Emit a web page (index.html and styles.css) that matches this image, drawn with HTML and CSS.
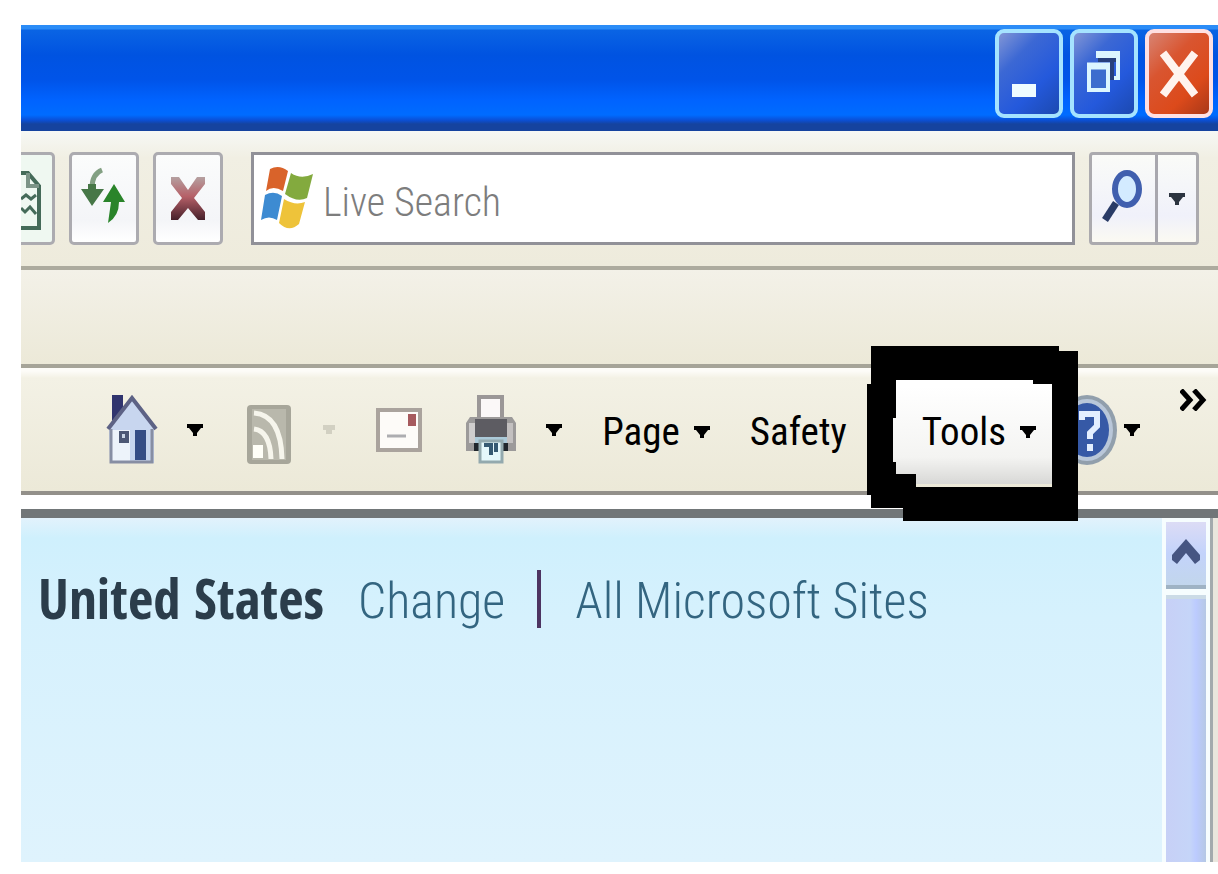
FILE: index.html
```html
<!DOCTYPE html>
<html lang="en">
<head>
    <meta charset="UTF-8">
    <meta name="viewport" content="width=device-width, initial-scale=1.0">
    <title>United States</title>
    <link rel="stylesheet" href="styles.css">
</head>
<body>

<div class="window">
    <div class="titlebar">
        <button class="win-btn" aria-label="Minimize">
            <svg width="64" height="82" viewBox="-2 0 64 82"><rect x="13" y="51" width="24" height="13" fill="#effcff"/></svg>
        </button>
        <button class="win-btn" aria-label="Restore">
            <svg width="64" height="82" viewBox="-2 -1 64 82">
                <path d="M22 19H44V44H37M22 22H44" fill="none" stroke="#dcf6ff" stroke-width="4"/>
                <path d="M24 26H42M38 28V46" fill="none" stroke="#27407c" stroke-width="4"/>
                <path d="M15 31H34V56H15Z" fill="#3c6dce" stroke="#dcf6ff" stroke-width="4"/>
                <path d="M13 32H36" stroke="#dcf6ff" stroke-width="7"/>
            </svg>
        </button>
        <button class="win-btn win-close" aria-label="Close">
            <svg width="64" height="82" viewBox="-2 0 64 82"><path d="M14 20L46 62M46 20L14 62" stroke="#fff3ee" stroke-width="8"/></svg>
        </button>
    </div>

    <div class="navbar">
        <button class="nav-btn nav-cut" aria-label="Compatibility View">
            <svg width="30" height="80" viewBox="0 0 30 80" fill="none" stroke="#456b59" stroke-width="4">
                <path d="M0 14H7L18 27V69H0"/>
                <path d="M7 14V27H18" stroke="#7c9487"/>
                <path d="M0 40L5 36L10 40L15 36M0 49L4 53L9 48L15 55" stroke-width="3"/>
            </svg>
        </button>
        <button class="nav-btn" aria-label="Refresh">
            <svg width="64" height="80" viewBox="0 0 64 80">
                <path d="M30 11Q20 15 20 29" fill="none" stroke="#83a083" stroke-width="5"/>
                <path d="M9 30H16V25H24V30H32L20 47Z" fill="#477747"/>
                <path d="M42 25L53 43H47Q47 57 36 64L39 43H31Z" fill="#2a842a"/>
            </svg>
        </button>
        <button class="nav-btn" aria-label="Stop">
            <svg width="64" height="80" viewBox="0 0 64 80">
                <defs>
                    <linearGradient id="stop" x1="0" y1="0" x2="0" y2="1">
                        <stop offset="0" stop-color="#b5a0a0"/>
                        <stop offset="0.45" stop-color="#b66068"/>
                        <stop offset="1" stop-color="#46202a"/>
                    </linearGradient>
                </defs>
                <path d="M15 18H23L32 31L41 18H49V25L38 39L49 53V61H42L32 49L22 61H15V53L26 39L15 25Z" fill="url(#stop)"/>
            </svg>
        </button>
        <label class="search">
            <svg width="54" height="66" viewBox="0 0 54 66">
                <path d="M9 3Q18 -2 27 5L22 25Q12 19 5 25Z" fill="#d9632a"/>
                <path d="M30 7Q40 14 52 8L46 32Q36 37 24 28Z" fill="#83aa3e"/>
                <path d="M4 29Q13 24 21 30L16 54Q8 49 0 54Z" fill="#3d8bd2"/>
                <path d="M23 33Q34 40 44 36L38 58Q28 67 18 57Z" fill="#eec33a"/>
            </svg>
            <input type="text" placeholder="Live Search" aria-label="Live Search">
        </label>
        <div class="search-go">
            <button class="go-btn" aria-label="Search">
                <svg width="62" height="80" viewBox="0 0 62 80" fill="none">
                    <path d="M24 44L13 61" stroke="#293b66" stroke-width="7"/>
                    <ellipse cx="35" cy="30" rx="12" ry="16" fill="#d3ebff" stroke="#405fae" stroke-width="6"/>
                </svg>
            </button>
            <button class="go-more" aria-label="Search Options">
                <svg class="arrow" width="18" height="12" viewBox="0 0 18 12"><path d="M1 0H17V4H15L11 9V12H7V9L3 4H1Z"/></svg>
            </button>
        </div>
    </div>

    <div class="tabbar"></div>

    <div class="commandbar">
        <button class="cmd" aria-label="Home">
            <svg width="52" height="70" viewBox="0 0 52 70">
                <path d="M6 0H17V14L6 26Z" fill="#30346e"/>
                <path d="M3 34L26 4L48 34V68H4Z" fill="#c8d6ef"/>
                <path d="M5 35H24V67H5Z" fill="#edf3fa"/>
                <path d="M2 34L26 3L50 34" fill="none" stroke="#5d6285" stroke-width="4"/>
                <path d="M5 34V67H46V34" fill="none" stroke="#878ea3" stroke-width="3"/>
                <rect x="13" y="36" width="10" height="12" fill="#4d5874"/>
                <rect x="29" y="35" width="11" height="30" fill="#354d86"/>
                <rect x="16" y="39" width="3" height="4" fill="#cbd6e4"/>
            </svg>
            <svg class="arrow" width="18" height="12" viewBox="0 0 18 12"><path d="M1 0H17V4H15L11 9V12H7V9L3 4H1Z"/></svg>
        </button>
        <button class="cmd" aria-label="Feeds">
            <svg width="52" height="70" viewBox="0 0 52 70">
                <rect x="4" y="10" width="44" height="59" rx="4" fill="#a7a69a"/>
                <rect x="9" y="14" width="34" height="51" fill="#b9b8ac"/>
                <g fill="none" stroke="#f6f5ec" stroke-width="5">
                    <path d="M11 18Q38 20 39 64"/>
                    <path d="M11 34Q27 36 28 64"/>
                </g>
                <rect x="10" y="50" width="10" height="13" fill="#fffff8"/>
            </svg>
            <svg class="arrow arrow-off" width="12" height="9" viewBox="0 0 12 9"><path d="M0 0H12V5H9V9H3V5H0Z"/></svg>
        </button>
        <button class="cmd" aria-label="Read Mail">
            <svg width="52" height="70" viewBox="0 0 52 70">
                <rect x="4" y="15" width="42" height="40" fill="#fdfbf8" stroke="#aaa39d" stroke-width="4"/>
                <rect x="34" y="19" width="8" height="12" fill="#a65a5e"/>
                <path d="M13 41H32" stroke="#adadb0" stroke-width="3"/>
            </svg>
        </button>
        <button class="cmd" aria-label="Print">
            <svg width="52" height="70" viewBox="0 0 52 70">
                <rect x="14" y="2" width="23" height="26" fill="#fbf8f8" stroke="#9b9797" stroke-width="4"/>
                <path d="M5 22H47L51 28V56H1V28Z" fill="#9c9a9a"/>
                <rect x="4" y="28" width="6" height="20" fill="#cfcdcd"/>
                <rect x="42" y="28" width="6" height="20" fill="#c3c0c0"/>
                <rect x="10" y="24" width="32" height="18" fill="#5d5c62"/>
                <path d="M10 42H42V50H10Z" fill="#abc9d8"/>
                <path d="M9 48H14V56H9ZM38 48H43V56H38Z" fill="#20262c"/>
                <path d="M15 46H37V67H15Z" fill="#e5f8fb" stroke="#93a9ae" stroke-width="3"/>
                <path d="M19 50H24M26 48V60M31 48V57" stroke="#365a72" stroke-width="4"/>
            </svg>
            <svg class="arrow" width="18" height="12" viewBox="0 0 18 12"><path d="M1 0H17V4H15L11 9V12H7V9L3 4H1Z"/></svg>
        </button>
        <button class="cmd cmd-text">Page
            <svg class="arrow" width="18" height="12" viewBox="0 0 18 12"><path d="M1 0H17V4H15L11 9V12H7V9L3 4H1Z"/></svg>
        </button>
        <button class="cmd cmd-text">Safety</button>
        <div class="tools-group">
            <div class="tools-wrap">
                <button class="cmd cmd-text tools">Tools
                    <svg class="arrow" width="18" height="12" viewBox="0 0 18 12"><path d="M1 0H17V4H15L11 9V12H7V9L3 4H1Z"/></svg>
                </button>
                <!-- hand drawn marker round the Tools button -->
                <svg class="marker" width="211" height="175" viewBox="0 0 211 175">
                    <path fill-rule="evenodd" d="M4 0H192V5H211V175H36V162H4V149H0V38H4ZM29 34V72H26V116H29V128H49V141H185V38H166V34Z"/>
                </svg>
            </div>
            <button class="cmd help" aria-label="Help">
                <svg width="60" height="70" viewBox="0 0 60 70">
                    <ellipse cx="30" cy="35" rx="30" ry="35" fill="#919fac"/>
                    <ellipse cx="30" cy="35" rx="26" ry="31" fill="#b9c7d9"/>
                    <ellipse cx="30" cy="35" rx="22" ry="27" fill="#3659a6"/>
                    <path d="M25 25V19H40V31L33 38V44" fill="none" stroke="#e3eeff" stroke-width="6"/>
                    <rect x="30" y="49" width="6" height="7" fill="#e3eeff"/>
                </svg>
                <svg class="arrow" width="18" height="12" viewBox="0 0 18 12"><path d="M1 0H17V4H15L11 9V12H7V9L3 4H1Z"/></svg>
            </button>
        </div>
        <button class="cmd more" aria-label="More">
            <svg width="27" height="22" viewBox="0 0 27 22" fill="none" stroke="#000" stroke-width="5"><path d="M1 1L10 11L1 21M14 1L23 11L14 21"/></svg>
        </button>
    </div>

    <div class="page">
        <div class="content">
            <strong>United States</strong>
            <a href="#" class="change">Change</a>
            <span class="divider"></span>
            <a href="#">All Microsoft Sites</a>
        </div>
        <div class="scrollbar">
            <button class="scroll-up" aria-label="Scroll up">
                <svg width="28" height="26" viewBox="0 0 28 26"><path d="M14 0L28 16V21L23 25L14 14L5 25L0 21V16Z" fill="#465582"/></svg>
            </button>
            <div class="thumb"></div>
        </div>
    </div>
</div>

</body>
</html>
```
FILE: styles.css
```css
* {
    box-sizing: border-box;
}
body {
    font-family: "Roboto Condensed", Roboto, "Liberation Sans", sans-serif;
    background: #fff;
    margin: 0;
}
button {
    font-family: inherit;
    margin: 0;
    padding: 0;
    border: none;
    background: none;
    cursor: pointer;
}
svg {
    display: block;
    flex: none;
}
.window {
    display: flex;
    flex-direction: column;
    min-height: 100vh;
    padding: 25px 0 12px 21px;
}

/* Title bar */
.titlebar {
    display: flex;
    justify-content: flex-end;
    gap: 7px;
    height: 106px;
    padding: 4px 5px 0 0;
    background: linear-gradient(#2b8cf7 0 4px, #0a64e4 5px, #0053e1 30px, #0054e9 55px, #0063ff 75px, #006cff 90px, #0a50d8 95px, #15439f 99px);
}
.win-btn {
    display: flex;
    justify-content: center;
    width: 68px;
    height: 89px;
    border: 4px solid #a5e3ff;
    border-radius: 9px;
    background: linear-gradient(135deg, #8296d6 0%, #3c68d4 30%, #2459dc 65%, #1c49b0 100%);
}
.win-close {
    border-color: #ffe0e2;
    background: linear-gradient(135deg, #d88473 0%, #d95530 35%, #dc4a1b 70%, #a93818 100%);
}

/* Address row */
.navbar {
    display: flex;
    align-items: flex-start;
    gap: 14px;
    height: 139px;
    padding: 21px 19px 0 0;
    background: linear-gradient(#f6f8f5, #f1efe3 20%, #eeebdc);
    border-bottom: 4px solid #adab9e;
}
.nav-btn {
    width: 70px;
    height: 93px;
    border: 3px solid #acabb0;
    border-radius: 5px;
    background: linear-gradient(#fbfcfc, #f4f5f8 75%, #fff);
}
.nav-cut {
    width: 34px;
    border-left: none;
    border-radius: 0 5px 5px 0;
    background: #eff8f1;
}
.search {
    display: flex;
    flex: 1;
    align-items: center;
    gap: 8px;
    min-width: 0;
    height: 93px;
    margin-left: 14px;
    padding-left: 7px;
    border: 3px solid #919198;
    background: #fff;
}
.search input {
    flex: 1;
    min-width: 0;
    padding: 8px 0 0;
    border: none;
    outline: none;
    background: none;
    font-family: inherit;
    font-size: 40px;
    font-weight: 300;
    color: #000;
}
.search input::placeholder {
    color: #7d7d7d;
    opacity: 1;
}
.search-go {
    display: flex;
    height: 93px;
    border: 3px solid #abaaae;
    border-radius: 4px;
    background: linear-gradient(#fafbf8, #f0f1fa 70%, #fbfaf2);
}
.go-btn {
    width: 66px;
    border-right: 3px solid #a8a7ae;
}
.go-more {
    display: flex;
    align-items: center;
    justify-content: center;
    width: 38px;
}
.arrow {
    fill: #000;
}
.go-more .arrow {
    fill: #2c3440;
}
.arrow-off {
    fill: #d2d0c2;
}

/* Tab row */
.tabbar {
    height: 98px;
    background: linear-gradient(#f3f1e8, #ece9d8);
    border-bottom: 4px solid #a6a498;
}

/* Command bar */
.commandbar {
    display: flex;
    align-items: center;
    justify-content: flex-end;
    gap: 39px;
    height: 127px;
    padding-right: 11px;
    background: linear-gradient(#fdfcf8 0 3px, #f3f1e5 10px, #ece9d8);
    border-bottom: 4px solid #93908a;
}
.cmd {
    display: flex;
    align-items: center;
    gap: 28px;
}
.cmd-text {
    gap: 13px;
    padding-top: 4px;
    font-size: 39px;
    line-height: 48px;
    color: #000;
}
.tools-group {
    display: flex;
    align-items: center;
}
.tools-wrap {
    position: relative;
    z-index: 1;
}
.tools {
    height: 108px;
    padding: 4px 20px 0 36px;
    background: linear-gradient(#fff 10%, #f4f4f2 75%, #d8d8d6);
}
.marker {
    position: absolute;
    right: -21px;
    top: -30px;
    pointer-events: none;
}
.help {
    gap: 6px;
}
.more {
    align-self: flex-start;
    padding-top: 21px;
}

/* Page area */
.page {
    display: flex;
    flex: 1;
    margin-top: 14px;
    border-top: 9px solid #717678;
    background: #e9e6dd;
    padding-right: 5px;
}
.content {
    display: flex;
    flex: 1;
    align-items: flex-start;
    padding: 52px 0 0 17px;
    font-size: 50px;
    line-height: 62px;
    white-space: nowrap;
    background: linear-gradient(#e2f2fc, #cff0fd 20px, #d6f1fd 100px, #dff3fd);
}
.content strong {
    font-family: "Open Sans Condensed", "Roboto Condensed", sans-serif;
    font-size: 55px;
    line-height: 56px;
    color: #2b3d4b;
}
.content a {
    font-weight: 300;
    color: #336580;
    text-decoration: none;
}
.change {
    margin: 0 32px 0 34px;
}
.divider {
    width: 4px;
    height: 58px;
    margin-right: 34px;
    background: #4d3461;
}
.scrollbar {
    display: flex;
    flex-direction: column;
    width: 51px;
    padding: 4px 4px 0 4px;
    border-right: 3px solid #a3aaad;
    background: #f6fdfe;
}
.scroll-up {
    display: flex;
    justify-content: center;
    height: 67px;
    padding-top: 17px;
    border-bottom: 4px solid #9fb3c4;
    background: linear-gradient(#dcdcf5, #c3d3fb 50%, #c2d6ec);
}
.thumb {
    flex: 1;
    margin-top: 6px;
    border-top: 4px solid #cbdbe6;
    background: linear-gradient(to right, #c7d0f6, #c5d5f8 60%, #bccbff 75%, #b5c8e4);
}
```
